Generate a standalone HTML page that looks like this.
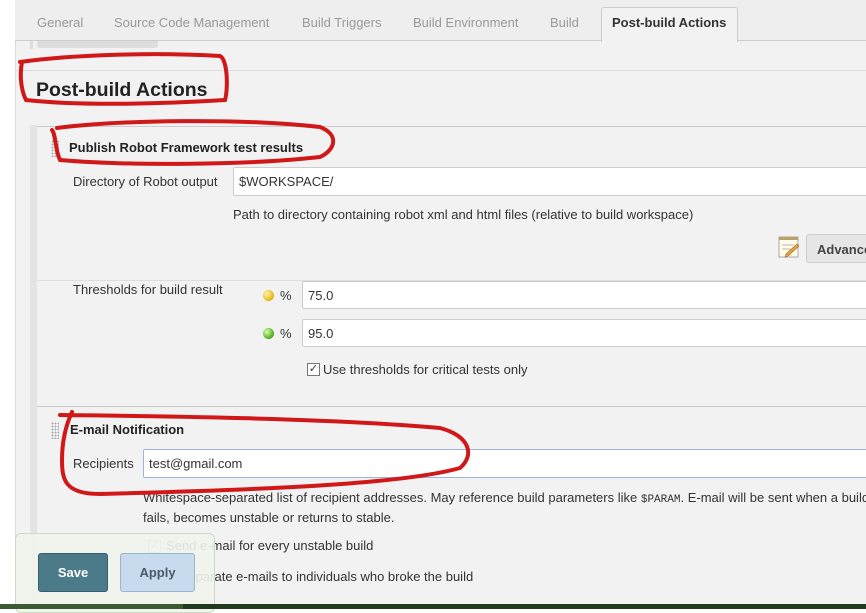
<!DOCTYPE html>
<html><head><meta charset="utf-8"><style>
*{box-sizing:border-box;margin:0;padding:0}
body{width:866px;height:609px;overflow:hidden;background:#fff;font-family:"Liberation Sans",Arial,sans-serif;font-size:13px;color:#333;position:relative}
.abs{position:absolute}
.main{left:15px;top:0;width:851px;height:609px;background:#f2f2f2;border-left:1px solid #ddd}
.tabs{left:15px;top:0;width:851px;height:41px;background:#eee;border-bottom:1px solid #ccc}
.tab{top:15px;color:#999;font-size:13px}
.inp{background:#fff;border:1px solid #ccc;border-radius:2px;padding:6px 5px;font-size:13px;color:#333}
</style></head><body>
<div class="abs main"></div>
<div class="abs tabs"></div>
<div class="abs tab" style="left:37px">General</div>
<div class="abs tab" style="left:114px">Source Code Management</div>
<div class="abs tab" style="left:302px">Build Triggers</div>
<div class="abs tab" style="left:413px">Build Environment</div>
<div class="abs tab" style="left:550px">Build</div>
<div class="abs" style="left:601px;top:7px;width:137px;height:35px;background:#f2f2f2;border:1px solid #ccc;border-bottom:none;border-radius:3px 3px 0 0"></div>
<div class="abs" style="left:612px;top:15px;font-weight:bold;color:#333">Post-build Actions</div>
<div class="abs" style="left:30px;top:41px;width:3px;height:8px;background:#ddd"></div>
<div class="abs" style="left:37px;top:41px;width:121px;height:7px;background:#ddd;border-radius:0 0 3px 3px"></div>
<div class="abs" style="left:15px;top:70px;width:851px;height:1px;background:#ddd"></div>
<div class="abs" style="left:36px;top:79px;font-size:19.5px;font-weight:bold;color:#222">Post-build Actions</div>
<div class="abs" style="left:30px;top:125px;width:7px;height:484px;background:#e4e4e4"></div>
<div class="abs" style="left:37px;top:126px;width:829px;height:1px;background:#ccc"></div>
<div class="abs" style="left:51px;top:140px;width:8px;height:17px;background-image:radial-gradient(#aaa 40%,transparent 45%);background-size:3px 3px"></div>
<div class="abs" style="left:69px;top:140px;font-weight:bold;color:#222">Publish Robot Framework test results</div>
<div class="abs" style="left:73px;top:174px">Directory of Robot output</div>
<div class="abs inp" style="left:233px;top:167px;width:640px;height:29px">$WORKSPACE/</div>
<div class="abs" style="left:233px;top:207px">Path to directory containing robot xml and html files (relative to build workspace)</div>
<svg class="abs" style="left:777px;top:235px" width="24" height="24"><rect x="2" y="2" width="19" height="20" fill="#fdfbe9" stroke="#aaa"/><rect x="2" y="2" width="19" height="3" fill="#b9a36a"/><line x1="5" y1="10" x2="17" y2="10" stroke="#bbb"/><line x1="5" y1="14" x2="14" y2="14" stroke="#bbb"/><path d="M9 19 L20 9 L22 11 L11 21 L8 22Z" fill="#e8a33a" stroke="#a06a20" stroke-width=".6"/></svg>
<div class="abs" style="left:806px;top:234px;width:70px;height:29px;background:#e6e6e6;border:1px solid #ccc;border-radius:3px;font-weight:bold;padding:7px 10px;color:#444">Advanced</div>
<div class="abs" style="left:37px;top:280px;width:829px;height:1px;background:#ddd"></div>
<div class="abs" style="left:73px;top:282px">Thresholds for build result</div>
<div class="abs" style="left:263px;top:290px;width:11px;height:11px;border-radius:50%;background:radial-gradient(circle at 35% 35%,#fff6b0,#e8c020 60%,#b08a00)"></div>
<div class="abs" style="left:280px;top:288px">%</div>
<div class="abs inp" style="left:302px;top:281px;width:570px;height:28px">75.0</div>
<div class="abs" style="left:263px;top:328px;width:11px;height:11px;border-radius:50%;background:radial-gradient(circle at 35% 35%,#d8ffb0,#5cb82a 60%,#2f7a10)"></div>
<div class="abs" style="left:280px;top:326px">%</div>
<div class="abs inp" style="left:302px;top:319px;width:570px;height:28px">95.0</div>
<div class="abs" style="left:307px;top:363px;width:13px;height:13px;border:1px solid #777;background:#fff;font-size:11px;line-height:11px;text-align:center">✓</div>
<div class="abs" style="left:323px;top:362px">Use thresholds for critical tests only</div>
<div class="abs" style="left:37px;top:406px;width:829px;height:1px;background:#ccc"></div>
<div class="abs" style="left:51px;top:422px;width:8px;height:17px;background-image:radial-gradient(#aaa 40%,transparent 45%);background-size:3px 3px"></div>
<div class="abs" style="left:70px;top:422px;font-weight:bold;color:#222">E-mail Notification</div>
<div class="abs" style="left:73px;top:456px">Recipients</div>
<div class="abs inp" style="left:143px;top:449px;width:730px;height:29px;border-color:#9ab4dd">test@gmail.com</div>
<div class="abs" style="left:143px;top:489px;line-height:18px;width:730px;white-space:nowrap">Whitespace-separated list of recipient addresses. May reference build parameters like <span style="font-family:'Liberation Mono',monospace;font-size:11px">$PARAM</span>. E-mail will be sent when a build<br>fails, becomes unstable or returns to stable.</div>
<div class="abs" style="left:148px;top:540px;width:13px;height:13px;border:1px solid #aaa;background:#fff;font-size:11px;line-height:11px;text-align:center;color:#999">✓</div>
<div class="abs" style="left:166px;top:538px;color:#333">Send e-mail for every unstable build</div>
<div class="abs" style="left:148px;top:569px">Send separate e-mails to individuals who broke the build</div>
<div class="abs" style="left:15px;top:533px;width:200px;height:80px;background:rgba(240,244,236,.9);border:1px solid #cfd8c8;border-radius:6px"></div>
<div class="abs" style="left:38px;top:553px;width:70px;height:39px;background:#4b7a89;border:1px solid #355e6b;border-radius:3px;color:#fff;font-weight:bold;text-align:center;line-height:37px">Save</div>
<div class="abs" style="left:120px;top:553px;width:75px;height:39px;background:#c8dbee;border:1px solid #9ab4cc;border-radius:3px;color:#4a5a6a;font-weight:bold;text-align:center;line-height:37px">Apply</div>
<div class="abs" style="left:0;top:604px;width:866px;height:5px;background:#1f3a1f"></div>
<div class="abs" style="left:0;top:604px;width:183px;height:5px;background:#3a5a32"></div>
<svg class="abs" style="left:0;top:0" width="866" height="609" fill="none" stroke="#d01818" stroke-width="4" stroke-linecap="round">
<path d="M20 62 C70 55,150 52,220 56 C228 60,228 90,225 100 C160 104,80 106,26 100 C20 88,20 72,22 62"/>
<path d="M57 128 C120 120,240 118,320 127 C340 135,335 150,320 157 C250 165,130 166,60 160 C55 150,56 135,52 130"/>
<path d="M60 415 C150 416,330 418,440 428 C470 436,475 455,460 468 C400 485,250 490,100 494 C65 494,62 480,62 460 C62 440,66 425,72 412"/>
</svg>
</body></html>
